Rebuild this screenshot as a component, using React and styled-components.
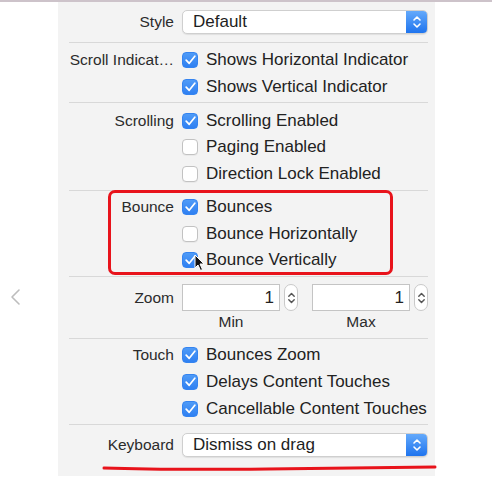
import React from "react";
import styled, { createGlobalStyle } from "styled-components";

const Global = createGlobalStyle`
  html, body { margin: 0; padding: 0; background: #ffffff; }
  body { font-family: "Liberation Sans", Arial, sans-serif; color: #232323; }
`;

const Page = styled.div`
  width: 492px;
  height: 494px;
  background: #fff;
  border-top: 2px solid #cdc3ca;
  box-sizing: border-box;
  display: flex;
  align-items: flex-start;
`;

const Gutter = styled.div`
  width: 58px;
  height: 474px;
  display: flex;
  align-items: flex-start;
  padding-top: 286px;
  box-sizing: border-box;
  padding-left: 10px;
`;

const Panel = styled.div`
  position: relative;
  width: 377px;
  height: 474px;
  background: #f3f3f3;
  box-sizing: border-box;
  padding: 0 7px 0 11px;
  display: flex;
  flex-direction: column;
`;

const Section = styled.div`
  display: flex;
  flex-direction: column;
  padding: ${(p) => p.$pad || "0"};
  border-bottom: ${(p) => (p.$last ? "none" : "1px solid #d8d8d8")};
`;

const Row = styled.div`
  display: grid;
  grid-template-columns: 105px 1fr;
  column-gap: 8px;
  align-items: center;
  height: ${(p) => p.$h || 27}px;
  box-sizing: border-box;
  padding-top: ${(p) => (p.$flat ? 0 : 1)}px;
`;

const ZoomRow = styled.div`
  display: grid;
  grid-template-columns: 105px 1fr;
  column-gap: 8px;
  align-items: start;
`;

const Label = styled.div`
  font-size: 15.5px;
  text-align: right;
  white-space: nowrap;
  overflow: hidden;
  color: #2b2b2b;
  line-height: ${(p) => (p.$lh ? `${p.$lh}px` : "normal")};
`;

const CheckLine = styled.label`
  display: flex;
  align-items: center;
  gap: 8px;
  font-size: 17px;
  white-space: nowrap;
  color: #222;
`;

const Box = styled.span`
  width: 16px;
  height: 16px;
  border-radius: 4px;
  box-sizing: border-box;
  display: inline-flex;
  align-items: center;
  justify-content: center;
  flex: none;
  background: ${(p) =>
    p.$on ? "linear-gradient(#4f9bf7, #2f80f2)" : "#ffffff"};
  border: 1px solid ${(p) => (p.$on ? "#3584f0" : "#c2c2c2")};
  box-shadow: ${(p) => (p.$on ? "none" : "0 1px 0 rgba(0,0,0,0.04)")};
`;

const Popup = styled.div`
  height: 24px;
  display: flex;
  align-items: stretch;
  background: #fff;
  border: 1px solid #cfcfcf;
  border-radius: 5px;
  box-shadow: 0 1px 1px rgba(0,0,0,0.08);
  overflow: hidden;
  box-sizing: border-box;
`;

const PopupText = styled.div`
  flex: 1;
  font-size: 17px;
  padding-left: 10px;
  display: flex;
  align-items: center;
  color: #1e1e1e;
`;

const PopupArrows = styled.div`
  width: 21px;
  background: linear-gradient(#63a9fb, #1f74ee);
  display: flex;
  align-items: center;
  justify-content: center;
`;

const ZoomGroup = styled.div`
  display: flex;
  gap: 14px;
`;

const ZoomCol = styled.div`
  display: grid;
  grid-template-columns: 98px 14px;
  grid-template-rows: 27px 20px;
  column-gap: 4px;
  align-items: center;
`;

const NumField = styled.div`
  height: 27px;
  background: #fff;
  border: 1px solid #c4c4c4;
  box-sizing: border-box;
  display: flex;
  align-items: center;
  justify-content: flex-end;
  padding-right: 5px;
  font-size: 17px;
`;

const Stepper = styled.div`
  width: 14px;
  height: 27px;
  background: #fff;
  border: 1px solid #c9c9c9;
  border-radius: 7px;
  box-sizing: border-box;
  display: flex;
  align-items: center;
  justify-content: center;
`;

const Caption = styled.div`
  font-size: 15.5px;
  color: #2b2b2b;
  text-align: center;
  padding-top: 1px;
`;

const Highlight = styled.div`
  position: absolute;
  left: 50px;
  top: 188px;
  width: 285px;
  height: 85px;
  border: 3px solid #e8131b;
  border-radius: 7px;
  box-sizing: border-box;
  pointer-events: none;
`;

const Underline = styled.svg`
  position: absolute;
  left: 44px;
  top: 459px;
  pointer-events: none;
`;

const Cursor = styled.svg`
  position: absolute;
  left: 136px;
  top: 252px;
  pointer-events: none;
`;

const Check = () => (
  <svg width="11" height="10" viewBox="0 0 11 10">
    <path d="M1.2 5.2 L4.2 8.3 L9.8 1.2" fill="none" stroke="#fff" strokeWidth="1.7" strokeLinecap="round" strokeLinejoin="round" />
  </svg>
);

const CB = ({ on, children }) => (
  <CheckLine>
    <Box $on={on}>{on && <Check />}</Box>
    {children}
  </CheckLine>
);

const UpDown = ({ color = "#fff", w = 10, h = 16 }) => (
  <svg width={w} height={h} viewBox="0 0 10 16">
    <path d="M2 6 L5 3 L8 6" fill="none" stroke={color} strokeWidth="1.6" strokeLinecap="round" strokeLinejoin="round" />
    <path d="M2 10 L5 13 L8 10" fill="none" stroke={color} strokeWidth="1.6" strokeLinecap="round" strokeLinejoin="round" />
  </svg>
);

const ZoomField = ({ value, caption }) => (
  <ZoomCol>
    <NumField>{value}</NumField>
    <Stepper><UpDown color="#555" w={9} h={18} /></Stepper>
    <Caption>{caption}</Caption>
  </ZoomCol>
);

export default function App() {
  return (
    <>
      <Global />
      <Page>
        <Gutter>
          <svg width="12" height="18" viewBox="0 0 12 18">
            <path d="M9 2 L2 9 L9 16" fill="none" stroke="#bdbdbd" strokeWidth="1.6" strokeLinecap="round" strokeLinejoin="round" />
          </svg>
        </Gutter>
        <Panel>
          <Section $pad="8px 0 8px">
            <Row $h={24} $flat>
              <Label>Style</Label>
              <Popup>
                <PopupText>Default</PopupText>
                <PopupArrows><UpDown /></PopupArrows>
              </Popup>
            </Row>
          </Section>
          <Section $pad="3px 0 2px">
            <Row>
              <Label>Scroll Indicat…</Label>
              <CB on>Shows Horizontal Indicator</CB>
            </Row>
            <Row>
              <Label />
              <CB on>Shows Vertical Indicator</CB>
            </Row>
          </Section>
          <Section $pad="4px 0 3px">
            <Row $h={26.5}>
              <Label>Scrolling</Label>
              <CB on>Scrolling Enabled</CB>
            </Row>
            <Row $h={26.5}>
              <Label />
              <CB>Paging Enabled</CB>
            </Row>
            <Row $h={26.5}>
              <Label />
              <CB>Direction Lock Enabled</CB>
            </Row>
          </Section>
          <Section $pad="3px 0 3px">
            <Row $h={26.5}>
              <Label>Bounce</Label>
              <CB on>Bounces</CB>
            </Row>
            <Row $h={26.5}>
              <Label />
              <CB>Bounce Horizontally</CB>
            </Row>
            <Row $h={26.5}>
              <Label />
              <CB on>Bounce Vertically</CB>
            </Row>
          </Section>
          <Section $pad="7px 0 7px">
            <ZoomRow>
              <Label $lh={27}>Zoom</Label>
              <ZoomGroup>
                <ZoomField value="1" caption="Min" />
                <ZoomField value="1" caption="Max" />
              </ZoomGroup>
            </ZoomRow>
          </Section>
          <Section $pad="2px 0 2px">
            <Row>
              <Label>Touch</Label>
              <CB on>Bounces Zoom</CB>
            </Row>
            <Row>
              <Label />
              <CB on>Delays Content Touches</CB>
            </Row>
            <Row>
              <Label />
              <CB on>Cancellable Content Touches</CB>
            </Row>
          </Section>
          <Section $pad="7px 0 0" $last>
            <Row $h={25} $flat>
              <Label>Keyboard</Label>
              <Popup>
                <PopupText>Dismiss on drag</PopupText>
                <PopupArrows><UpDown /></PopupArrows>
              </Popup>
            </Row>
          </Section>

          <Highlight />
          <Underline width="336" height="14" viewBox="0 0 336 14">
            <path d="M2 7 Q60 9 166 8 T333 6" fill="none" stroke="#e8131b" strokeWidth="3" strokeLinecap="round" />
          </Underline>
          <Cursor width="12" height="18" viewBox="0 0 12 18">
            <path d="M1 1 L1 14 L4 11 L6.5 16.5 L8.5 15.5 L6 10 L10 10 Z" fill="#111" stroke="#fff" strokeWidth="1" strokeLinejoin="round" />
          </Cursor>
        </Panel>
      </Page>
    </>
  );
}
